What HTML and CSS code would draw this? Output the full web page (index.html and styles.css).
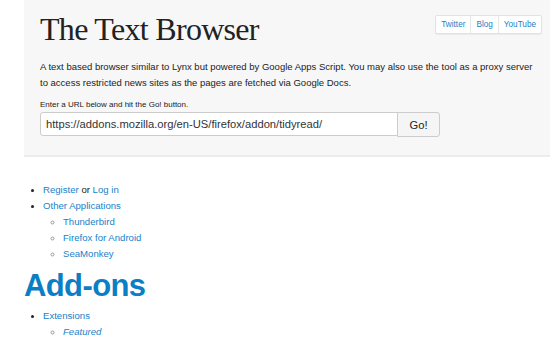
FILE: index.html
```html
<!DOCTYPE html>
<html>
<head>
<meta charset="utf-8">
<link rel="stylesheet" href="styles.css">
</head>
<body>
<div class="page">
  <header class="hero">
    <div class="hero-top">
      <h1 class="title">The Text Browser</h1>
      <nav class="social">
        <a href="#">Twitter</a>
        <a href="#">Blog</a>
        <a href="#">YouTube</a>
      </nav>
    </div>
    <p class="intro">A text based browser similar to Lynx but powered by Google Apps Script. You may also use the tool as a proxy server<br>to access restricted news sites as the pages are fetched via Google Docs.</p>
    <label class="hint">Enter a URL below and hit the Go! button.</label>
    <form class="url-form">
      <input class="url" type="text" value="https://addons.mozilla.org/en-US/firefox/addon/tidyread/">
      <button class="go" type="button">Go!</button>
    </form>
  </header>
  <main class="content">
    <ul class="list">
      <li><a href="#">Register</a> or <a href="#">Log in</a></li>
      <li><a href="#">Other Applications</a>
        <ul class="list sub">
          <li><a href="#">Thunderbird</a></li>
          <li><a href="#">Firefox for Android</a></li>
          <li><a href="#">SeaMonkey</a></li>
        </ul>
      </li>
    </ul>
    <h2 class="section">Add-ons</h2>
    <ul class="list">
      <li><a href="#">Extensions</a>
        <ul class="list sub">
          <li><a href="#"><em>Featured</em></a></li>
          <li><a href="#">Most Popular</a></li>
        </ul>
      </li>
    </ul>
  </main>
</div>
</body>
</html>
```

FILE: styles.css
```css
html, body {
  margin: 0;
  padding: 0;
  background: #fff;
  overflow: hidden;
}
body {
  font-family: "Liberation Sans", Arial, sans-serif;
  color: #222;
}
.page {
  padding-left: 24px;
}
.hero {
  background: #f7f7f7;
  border-bottom: 2px solid #ececec;
  padding: 10px 8px 20px 16px;
  height: 125px;
}
.hero-top {
  display: flex;
  justify-content: space-between;
  align-items: flex-start;
}
.title {
  margin: 0;
  font-family: "Liberation Serif", "Times New Roman", serif;
  font-weight: normal;
  font-size: 32px;
  letter-spacing: -0.7px;
  line-height: 38px;
  color: #222;
}
.social {
  display: flex;
  margin-top: 5px;
  border: 1px solid #e2e2e2;
  border-radius: 2px;
  background: #fff;
  box-shadow: 0 1px 1px rgba(0,0,0,0.05);
}
.social a {
  font-size: 8.2px;
  line-height: 17px;
  padding: 0 5px;
  color: #1a82c8;
  text-decoration: none;
  border-left: 1px solid #e6e6e6;
}
.social a:first-child {
  border-left: none;
}
.intro {
  margin: 11px 0 0;
  font-size: 9.5px;
  line-height: 16px;
  color: #222;
}
.hint {
  display: block;
  margin-top: 9px;
  font-size: 8px;
  line-height: 10px;
  color: #222;
}
.url-form {
  display: flex;
  margin-top: 2px;
}
.url {
  box-sizing: border-box;
  width: 358px;
  height: 24px;
  border: 1px solid #ccc;
  border-radius: 3px 0 0 3px;
  padding: 0 5px;
  font-family: "Liberation Sans", Arial, sans-serif;
  font-size: 11.2px;
  color: #333;
  background: #fff;
}
.go {
  box-sizing: border-box;
  width: 43px;
  height: 25px;
  border: 1px solid #ccc;
  border-radius: 0 3px 3px 0;
  background: #f5f5f5;
  font-family: "Liberation Sans", Arial, sans-serif;
  font-size: 11.2px;
  color: #222;
  padding: 0;
  margin-left: -1px;
}
.content {
  padding-top: 25px;
}
.list {
  margin: 0;
  padding-left: 19px;
  list-style: disc;
  font-size: 9.6px;
  line-height: 16px;
}
.list.sub {
  padding-left: 20px;
  list-style: circle;
}
.list a {
  color: #1a82c8;
  text-decoration: none;
}
.list li::marker {
  color: #222;
  font-size: 9px;
}
.list.sub li::marker {
  color: #999;
}
.section {
  margin: 1px 0 0;
  font-family: "Liberation Sans", Arial, sans-serif;
  font-weight: bold;
  font-size: 31px;
  letter-spacing: -0.6px;
  line-height: 45px;
  color: #0a7fc4;
}
```
